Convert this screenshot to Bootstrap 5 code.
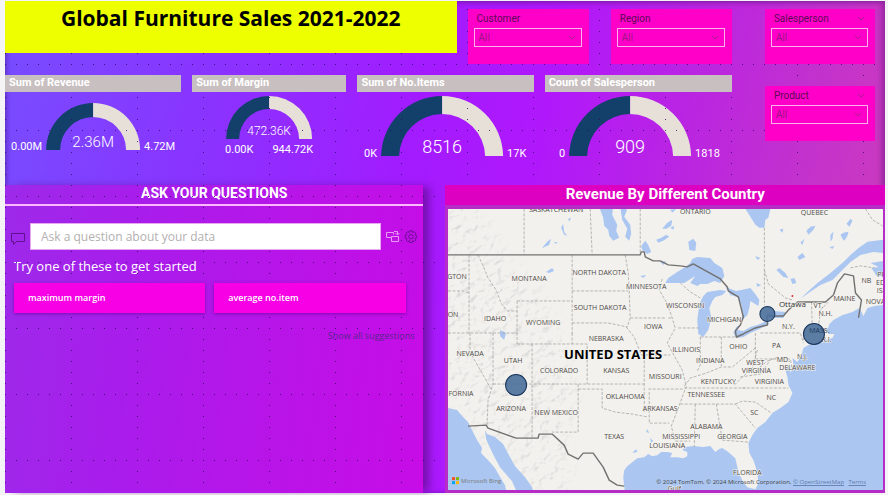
<!DOCTYPE html>
<html lang="en">
<head>
<meta charset="utf-8">
<meta name="viewport" content="width=device-width, initial-scale=1">
<title>Global Furniture Sales 2021-2022</title>
<link href="https://cdn.jsdelivr.net/npm/bootstrap@5.3.0/dist/css/bootstrap.min.css" rel="stylesheet">
<style>
  body { background: #f4f4f6; font-family: "Open Sans", "Noto Sans", sans-serif; color: #fff; }
  .din { font-family: Roboto, "Liberation Sans", sans-serif; }
  .report { margin: 1px 3px 2px 5px; background: linear-gradient(100deg, #774dff 0%, #8b32ff 24%, #a31bff 45%, #b018fb 58%, #bc28dc 76%, #cb3bbd 96%);
    box-shadow: inset 2px 0 4px rgba(70,20,130,.45), inset -4px 2px 5px rgba(120,30,140,.5); }
  /* design-grid dots drawn over translucent visuals */
  .report::after { content: ""; position: absolute; inset: 0; pointer-events: none;
    background-image: radial-gradient(circle at 0 0, #2b0a66 1px, transparent 1px), radial-gradient(circle at 0 0, #2b0a66 1px, transparent 1px);
    background-size: 11px 66px, 66px 11px; background-position: 0 63px, 0 8px; opacity: .8; }
  .over { position: relative; z-index: 2; }
  .row-top { gap: 33px; padding-right: 10px; }
  .f-main { flex: 726 1 0; gap: 11px; }
  .f-side { flex: 110 1 0; padding-top: 8px; gap: 22px; }
  .head-grid { display: grid; grid-template-columns: minmax(0,451fr) 11fr minmax(0,121fr) 22fr minmax(0,121fr); height: 63px; align-items: start; }
  .head-grid .slicer { margin-top: 8px; }
  .head-grid .c3 { grid-column: 3; } .head-grid .c5 { grid-column: 5; }
  .gap-a { gap: 11px; } .gap-b { gap: 22px; }
  .banner { background: #eeff00; color: #000; font-size: 21px; line-height: 34px; height: 52px; font-weight: 700; white-space: nowrap; }
  .slicer { background: #ff00c8; height: 55px; padding: 3px 7px 0 6px; font-size: 10px; }
  .slicer label { color: #5c0a57; line-height: 13px; padding-left: 3px; display: block; }
  .slicer .form-select { --bs-form-select-bg-img: none; background: transparent; border: 1px solid #ffb0ee; border-radius: 0; height: 19px; line-height: 15px;
    padding: 1px 4px; font-size: 10px; color: #9c1585; margin-top: 3px; font-family: "Open Sans", sans-serif; }
  .slicer .chev { position: absolute; right: 6px; top: 7px; }
  .slicer .chev-top { position: absolute; right: 10px; top: 7px; }
  .g176 { flex: 176 1 0; } .g154 { flex: 154 1 0; } .g187 { flex: 187 1 0; }
  .gauge-head { background: #c8c0c0; font-size: 11px; line-height: 15px; height: 17px; padding-left: 4px; font-weight: 700; margin: 0; white-space: nowrap; }
  .gauge { display: block; width: 100%; height: 93px; }
  .gauge text { fill: #fff; font-family: Roboto, sans-serif; font-size: 11px; }
  .gauge .big { font-weight: 300; }
  .gauge .s12 { font-size: 12px; } .gauge .s15 { font-size: 15px; } .gauge .s18 { font-size: 18px; }
  .f-qa { flex: 418 1 0; background: linear-gradient(97deg, #9d2aea 0%, #a81deb 30%, #b814e8 65%, #c70ce7 100%); box-shadow: 8px 0 8px -2px rgba(90,10,130,.65); height: 308px; }
  .f-map { flex: 439 1 0; background: #b62cc6; }
  .qa-head { font-size: 14px; line-height: 17px; height: 21px; font-weight: 700; border-bottom: 2px solid #fbb8ff; margin: 0; }
  .map-head { background: #dd00c0; font-size: 15px; line-height: 18px; height: 20px; font-weight: 700; margin: 0; }
  .map-box { padding: 4px 2px 3px 3px; }
  .map { display: block; width: 100%; height: 281px; }
  .ask { padding: 17px 5px 0 6px; gap: 5px; }
  .ask .form-control { border: 1px solid #e6a8ef; border-radius: 0; height: 27px; padding: 0 10px; font-size: 12px; }
  .ask .form-control::placeholder { color: #b3b0b0; opacity: 1; }
  .hint { font-size: 13px; line-height: 18px; margin: 7px 9px 8px; }
  .sugg { gap: 9px; padding: 0 18px 0 9px; }
  .sugg .btn { background: #f800e6; border: 0; border-radius: 0; height: 30px; padding: 0 14px; font-size: 9px; font-weight: 600; color: #fff; text-align: left; flex: 1 1 0; box-shadow: 0 1px 3px rgba(90,0,140,.6); }
  .more { font-size: 9px; line-height: 14px; padding: 16px 9px 0; }
  .more a { color: #5a2490; text-decoration: none; }
  .st text { font-size: 7px; fill: #4c4946; text-anchor: middle; stroke: #f5f3ef; stroke-width: 1px; paint-order: stroke; }
  .st .city { font-size: 8px; fill: #333; }
  .st .country { font-size: 13px; font-weight: 700; fill: #000; }
  .map text { font-family: "Open Sans", "Noto Sans", sans-serif; }
</style>
<script src="https://cdn.jsdelivr.net/npm/bootstrap@5.3.0/dist/js/bootstrap.bundle.min.js"></script>
</head>
<body>
<main class="report position-relative">
  <div class="d-flex row-top">
    <div class="f-main d-flex flex-column">
      <div class="head-grid">
        <h1 class="banner over text-center mb-0">Global Furniture Sales 2021-2022</h1>
        <div class="slicer over c3 din"><label for="s1">Customer</label>
          <div class="position-relative"><select id="s1" class="form-select"><option>All</option></select>
          <svg class="chev" width="8" height="5"><path d="M1 1l3 3 3-3" fill="none" stroke="#b01890"/></svg></div></div>
        <div class="slicer over c5 din"><label for="s2">Region</label>
          <div class="position-relative"><select id="s2" class="form-select"><option>All</option></select>
          <svg class="chev" width="8" height="5"><path d="M1 1l3 3 3-3" fill="none" stroke="#b01890"/></svg></div></div>
      </div>
      <div class="d-flex gap-a">
        <section class="g176"><h2 class="gauge-head over din">Sum of Revenue</h2>
          <svg class="gauge" viewBox="0 0 176 93"><path d="M41 58A47 47 0 0 1 88 11V25A33 33 0 0 0 55 58z" fill="#12406a"/><path d="M88 11A47 47 0 0 1 135 58H121A33 33 0 0 0 88 25z" fill="#e6e0d9"/>
          <text x="37" y="58" text-anchor="end">0.00M</text><text x="139" y="58">4.72M</text><text class="big s15" x="88" y="55" text-anchor="middle">2.36M</text></svg></section>
        <section class="g154"><h2 class="gauge-head over din">Sum of Margin</h2>
          <svg class="gauge" viewBox="0 0 154 93"><path d="M34 47A43 43 0 0 1 77 4V17A30 30 0 0 0 47 47z" fill="#12406a"/><path d="M77 4A43 43 0 0 1 120 47H107A30 30 0 0 0 77 17z" fill="#e6e0d9"/>
          <text x="33" y="61">0.00K</text><text x="121" y="61" text-anchor="end">944.72K</text><text class="big s12" x="77" y="43" text-anchor="middle">472.36K</text></svg></section>
        <section class="g176"><h2 class="gauge-head over din">Sum of No.Items</h2>
          <svg class="gauge" viewBox="0 0 176 93"><path d="M24 64A61 61 0 0 1 85 4V22A43 43 0 0 0 42 64z" fill="#12406a"/><path d="M85 4A61 61 0 0 1 146 64H128A43 43 0 0 0 85 22z" fill="#e6e0d9"/>
          <text x="20" y="65" text-anchor="end">0K</text><text x="150" y="65">17K</text><text class="big s18" x="85" y="61" text-anchor="middle">8516</text></svg></section>
        <section class="g187"><h2 class="gauge-head over din">Count of Salesperson</h2>
          <svg class="gauge" viewBox="0 0 187 93"><path d="M24 64A61 61 0 0 1 85 4V22A43 43 0 0 0 42 64z" fill="#12406a"/><path d="M85 4A61 61 0 0 1 146 64H128A43 43 0 0 0 85 22z" fill="#e6e0d9"/>
          <text x="20" y="65" text-anchor="end">0</text><text x="150" y="65">1818</text><text class="big s18" x="85" y="61" text-anchor="middle">909</text></svg></section>
      </div>
    </div>
    <div class="f-side d-flex flex-column">
      <div class="slicer over din"><label for="s3">Salesperson</label><svg class="chev-top" width="8" height="5"><path d="M1 1l3 3 3-3" fill="none" stroke="#b01890"/></svg>
        <div class="position-relative"><select id="s3" class="form-select"><option>All</option></select>
        <svg class="chev" width="8" height="5"><path d="M1 1l3 3 3-3" fill="none" stroke="#b01890"/></svg></div></div>
      <div class="slicer over din"><label for="s4">Product</label><svg class="chev-top" width="8" height="5"><path d="M1 1l3 3 3-3" fill="none" stroke="#b01890"/></svg>
        <div class="position-relative"><select id="s4" class="form-select"><option>All</option></select>
        <svg class="chev" width="8" height="5"><path d="M1 1l3 3 3-3" fill="none" stroke="#b01890"/></svg></div></div>
    </div>
  </div>

  <div class="d-flex gap-b align-items-start">
    <section class="f-qa">
      <h2 class="qa-head din text-center">ASK YOUR QUESTIONS</h2>
      <div class="ask d-flex align-items-center">
        <svg width="14" height="13" class="flex-shrink-0 mt-1" fill="none" stroke="#61108f"><path d="M.5 1.500h13v8H5.500l-3 3v-3h-2z"/></svg>
        <input class="form-control over" type="text" placeholder="Ask a question about your data" aria-label="Ask a question about your data">
        <div class="d-flex gap-1 flex-shrink-0">
          <svg width="14" height="13" fill="none" stroke="#e79cf2"><path d="M5.500 7.500h-5v-5h7v2M5.500 6.500h7v5h-7zM8 1.500h3.500v3M9.500 3l2 2 2-2"/></svg>
          <svg width="14" height="14" viewBox="0 0 14 14" fill="none" stroke="#6c0f95"><path d="M5.800.8h2.400l.4 1.700 1.500-.9 1.700 1.700-.9 1.500 1.800.6v2.400l-1.800.5.9 1.600-1.700 1.700-1.500-.9-.4 1.800H5.800l-.4-1.800-1.600.9-1.700-1.700.9-1.600-1.800-.5V5.400L3 4.800l-.9-1.500 1.700-1.700 1.600.9z"/><circle cx="7" cy="6.700" r="2.200"/></svg>
        </div>
      </div>
      <p class="hint">Try one of these to get started</p>
      <div class="sugg d-flex over"><button type="button" class="btn">maximum margin</button><button type="button" class="btn">average no.item</button></div>
      <div class="more text-end"><a href="#">Show all suggestions</a></div>
    </section>

    <section class="f-map over">
      <h2 class="map-head din text-center">Revenue By Different Country</h2>
      <div class="map-box">
      <svg class="map" viewBox="448 209 434 281" preserveAspectRatio="xMidYMid slice" role="img" aria-label="Map of revenue by country">
        <defs>
          <filter id="relief" x="0" y="0" width="100%" height="100%"><feTurbulence type="fractalNoise" baseFrequency=".11 .13" numOctaves="3" seed="8" result="n"/><feDiffuseLighting in="n" surfaceScale="2.200" lighting-color="#fff"><feDistantLight azimuth="215" elevation="55"/></feDiffuseLighting><feColorMatrix type="matrix" values="0 0 0 0 .5  0 0 0 0 .5  0 0 0 0 .5  -2.400 0 0 0 1.850"/></filter>
          <filter id="soft"><feGaussianBlur stdDeviation="8"/></filter>
          <mask id="west"><path filter="url(#soft)" fill="#fff" d="M440 200H470L510 260 545 300 560 330 575 400 565 430 570 490H520L440 380z"/></mask>
        </defs>
        <rect x="440" y="200" width="450" height="300" fill="#f2f1ee"/>
        <g mask="url(#west)"><rect x="448" y="209" width="150" height="281" filter="url(#relief)" opacity=".5"/></g>
        <g fill="#abc7f1">
          <path d="M440 406L457 410 463 417 468 422 472 430 477 440 482 448 481 453 490 462 495 468 499 475 505 485 507 495H440z"/>
          <path d="M485 430L487 434 495 437 503 444 509 455 515 466 525 477 532 487 534 495H518L512 481 505 473 500 467 495 458 490 448 486 439z"/>
          <path d="M625 495L624 486 623 477 624 470 627 466 632 462 637 458 644 457 648 454 652 456 657 455 661 452 667 452 672 453 670 457 677 457 683 458 687 456 687 452 682 450 685 447 693 446 703 447 710 446 715 452 719 449 722 448 728 452 735 458 737 467 739 474 743 482 747 487 755 489 758 483 757 472 753 460 749 453 748 443 752 435 757 428 765 422 772 413 780 408 788 402 792 393 788 385 787 377 785 370 789 365 790 373 793 364 792 358 797 362 801 355 803 348 808 345 823 341 832 338 834 334 828 334 827 330 829 324 833 320 842 315 852 312 859 308 863 316 867 308 874 306 890 304V500z"/>
          <path d="M665 283L668 278 677 272 685 267 690 263 692 259 697 257 710 258 714 263 722 268 724 276 720 283 714 281 707 284 700 284 697 286 690 283 695 276 684 283 673 283z"/>
          <path d="M700 302L703 296 707 292 720 290 726 291 722 295 715 297 712 301 709 308 711 318 708 330 703 337 698 334 697 320 698 312z"/>
          <path d="M725 287L736 291 750 288 755 294 759 300 758 306 750 301 749 308 747 315 742 320 741 305 737 297 730 295z"/>
          <path d="M733 333L736 327 740 325 737 330 743 331 750 327 757 325 767 321 769 324 757 330 750 333 743 337 736 338z"/>
          <path d="M765 316L773 311 785 312 783 318 772 318z"/><path d="M745 209H770L768 218 765 220 764 228 759 228 755 225 750 217z"/>
          <path d="M599 207H613L612 215 617 225 616 231 619 238 613 241 609 236 608 230 604 226 603 218z"/><path d="M620 207L627 210 624 217 630 225 631 234 629 241 625 237 627 229 622 220z"/>
          <path d="M890 239L867 242 858 248 850 255 843 262 830 273 817 283 807 292 800 299 808 293 820 285 832 280 840 272 850 262 860 255 873 252 890 254z"/><path d="M890 260L870 263 878 267 871 268 876 276 890 276z"/>
          <path d="M542 248l5-6 4-3-2 6zM561 228l2-4 1 8 3 4-3-1zM568 219l3-1-2 4zM554 242l4 1-3 1zM546 272l6-4 2 3-5 2zM500 330l6 3-2 7-4-4zM688 242l5-3 3 4-1 8-6-1zM662 229l5-6 5-3-1 6-5 3zM656 240l5-2 5-3 3 2-6 4-5 2zM670 210l6-1-4 4zM641 246l4-5 3 4 3 7-4 2-5-4zM660 262l6-1-3 4zM640 276l6-1-3 3zM797 257l5-4 3 4-6 3zM806 231l4-4 5-1-2 4-5 5zM800 243l4-4-2 6zM779 230l4-1-1 4zM776 270l3-2 6 5 3 5-5-1zM790 279l4-1 2 5-4 1zM830 235l3-3-1 7-2 3zM840 235l3-2 5-1-1 4-3 5-2-2zM846 224l4-5 2 2-3 6zM829 247l5-1-2 3zM755 256l5 2-3 2zM756 283l5 2-4 2zM670 228l4-2-1 4zM632 453l4-4 1 3zM650 438l3 3-2 2zM647 429l2 4-3-1z"/>
        </g>
        <g fill="none" stroke="#a9a6a2" stroke-dasharray="3 1.500" stroke-width=".8">
          <path d="M524 209V255M590 209L592 255M640 209V255M469 255V333M448 291H462L469 293M478 255L483 266 488 278 496 290 501 303 507 311 517 311M517 301V344M517 301H572M572 255V334M572 291H628M625 255L628 273 629 292 630 318 627 327M572 323H608L627 327M630 318H665M448 333H517M493 333V384L488 400 487 425M517 344H587V384M532 344V438M493 384H644M572 333V344M644 356V412M578 384V432H552M578 389H602V408L615 412 632 414 648 417M626 327L634 337 641 355M641 355H670M470 333V352L491 389M648 389H683M649 392V423H669M764 228V305M764 270L768 284 785 298 792 300"/>
          <path d="M700 337V365L697 371M721 337V366M700 337H740M755 333V359M760 333H800L803 343M755 359H790L792 371M678 328H699M684 388H745M742 388H788M680 404H735L755 428M695 404L694 447M716 404L722 440M722 440L748 442M735 404L742 401 755 402 771 413M684 386L690 378 706 373 721 367 732 367 743 358 756 347M662 279L659 290 666 302 671 315 675 328 667 343 674 356 682 370 686 386 678 408 671 426 675 441H690M668 318H671M757 350L752 368 742 377 733 386M756 370L767 361 778 357M740 377L760 374 770 360M811 302L812 330M818 328L820 310 828 302M807 330H828M803 340L806 330M680 283L690 292 700 298M865 209L872 220 882 226M850 268L860 266 874 268"/>
        </g>
        <g fill="none" stroke="#73716f" stroke-width="1.400" stroke-linejoin="round">
          <path d="M448 255H640L641 252 644 252 645 257 653 261 660 261 668 265 680 266 687 267 693 264 720 279 727 287 728 291 738 297 740 305 743 317 740 325 735 331 736 337 743 334 755 328 767 325V316L783 316 788 310 797 302H825L833 295 837 283 844 274 853 276 855 293 861 300 858 318"/>
          <path d="M468 426L486 425 488 428 516 438H538L539 434H552L564 445 568 454 578 459 583 453H593L603 467 609 480 617 485 624 486"/>
        </g>
        <g class="st">
          <text x="556" y="212">SASKATCHEWAN</text><text x="695" y="214">ONTARIO</text><text x="814" y="215">QUEBEC</text><text x="457" y="279">GTON</text><text x="529" y="281">MONTANA</text><text x="599" y="275">NORTH DAKOTA</text><text x="646" y="289">MINNESOTA</text><text x="600" y="310">SOUTH DAKOTA</text><text x="685" y="308">WISCONSIN</text><text x="495" y="321">IDAHO</text><text x="543" y="325">WYOMING</text><text x="453" y="317">ON</text><text x="653" y="329">IOWA</text><text x="606" y="341">NEBRASKA</text><text x="470" y="356">NEVADA</text><text x="513" y="363">UTAH</text><text x="559" y="373">COLORADO</text><text x="616" y="373">KANSAS</text><text x="665" y="379">MISSOURI</text><text x="461" y="396">FORNIA</text><text x="625" y="399">OKLAHOMA</text><text x="511" y="411">ARIZONA</text><text x="556" y="415">NEW MEXICO</text><text x="660" y="411">ARKANSAS</text><text x="614" y="439">TEXAS</text><text x="681" y="439">MISSISSIPPI</text><text x="667" y="448">LOUISIANA</text><text x="706" y="429">ALABAMA</text><text x="732" y="439">GEORGIA</text><text x="747" y="475">FLORIDA</text><text x="706" y="397">TENNESSEE</text><text x="718" y="384">KENTUCKY</text><text x="769" y="384">VIRGINIA</text><text x="771" y="400">NC</text><text x="754" y="415">SC</text><text x="755" y="365">WEST</text><text x="756" y="373">VIRGINIA</text><text x="783" y="362">MD.</text><text x="802" y="359">N.J.</text><text x="797" y="370">DELAWARE</text><text x="776" y="348">PA</text><text x="738" y="349">OHIO</text><text x="710" y="363">INDIANA</text><text x="686" y="352">ILLINOIS</text><text x="724" y="322">MICHIGAN</text><text x="788" y="329">N.Y.</text><text x="818" y="308">VT.</text><text x="825" y="316">N.H.</text><text x="826" y="342">R.I.</text><text x="844" y="301">MAINE</text><text x="866" y="283">NB</text><text x="881" y="277">PR</text><text x="880" y="285">ED</text><text x="881" y="293">ISL</text><text x="875" y="304">NOVA</text><text x="674" y="491">Gulf</text>
          <text class="city" x="792" y="307">Ottawa</text>
          <text class="country" x="613" y="359">UNITED STATES</text>
        </g>
        <circle cx="792" cy="296" r="1" fill="#d33"/>
        <g fill="#4a6f9a" fill-opacity=".9" stroke="#17335a"><circle cx="516" cy="385" r="10.500"/><circle cx="767" cy="314" r="7.500"/><circle cx="813.500" cy="334" r="10.500"/></g>
        <text x="819" y="333" font-size="7" fill="#1f3c60" text-anchor="middle">MASS.</text>
        <path d="M452 477h3v3h-3z" fill="#f25022"/><path d="M456 477h3v3h-3z" fill="#7fba00"/><path d="M452 481h3v3h-3z" fill="#00a4ef"/><path d="M456 481h3v3h-3z" fill="#ffb900"/>
        <text x="461" y="483" font-size="6" fill="#777">Microsoft Bing</text>
        <text x="656" y="484" font-size="6" fill="#444">© 2024 TomTom, © 2024 Microsoft Corporation, <a href="#"><tspan fill="#6079ad" text-decoration="underline">© OpenStreetMap</tspan></a></text>
        <a href="#"><text x="848" y="484" font-size="6" fill="#6079ad" text-decoration="underline">Terms</text></a>
      </svg>
      </div>
    </section>
  </div>
</main>
</body>
</html>
